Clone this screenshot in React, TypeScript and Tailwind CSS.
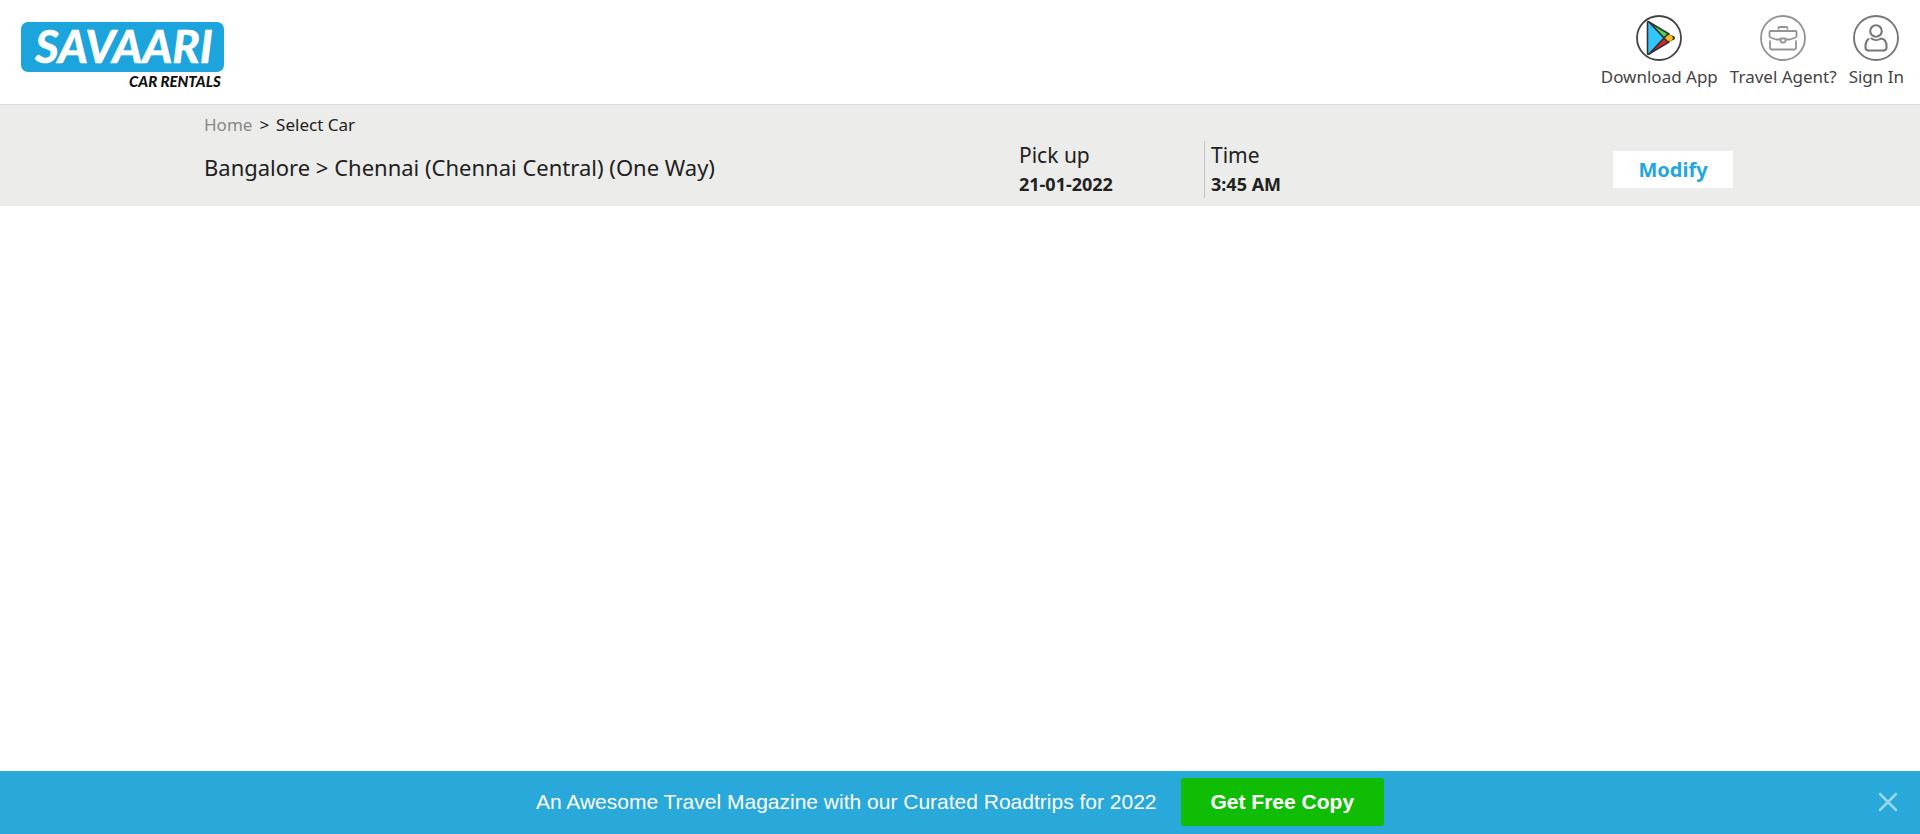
import type { ReactNode } from "react";

function Logo() {
  return (
    <a href="#" aria-label="Savaari Car Rentals" className="block">
      <svg width="208" height="88" viewBox="0 -14 208 88" fontFamily="Lato, sans-serif" fontStyle="italic">
        <rect x="1" y="2" width="203" height="50" rx="7" fill="#1ba5dc" />
        <text x="15" y="43" fontSize="46" fontWeight="700" fill="#fff" stroke="#fff" strokeWidth="0.7">SAVAARI</text>
        <text x="109" y="67" fontSize="15" fontWeight="900" fill="#111">CAR RENTALS</text>
      </svg>
    </a>
  );
}

function PlayIcon() {
  return (
    <svg width="46" height="46" viewBox="0 0 46 46" fill="none">
      <circle cx="23" cy="23" r="22" stroke="#444" strokeWidth="1.8" />
      <g stroke="#333" strokeWidth="1.6" strokeLinejoin="round">
        <path d="M13 7 L33 19 L28 23 Z" fill="#4bd94b" />
        <path d="M13 39 L33 27 L28 23 Z" fill="#e0262c" />
        <path d="M31.500 19.500 L37.500 22 Q39 23 37.500 24 L31.500 26.500 L28 23 Z" fill="#f7bd0b" />
        <path d="M11.500 8 Q11.500 6 13 7 L28 23 L13 39 Q11.500 40 11.500 38 Z" fill="#33c5ff" />
      </g>
      <circle cx="33.500" cy="23" r="3" fill="#f7bd0b" />
    </svg>
  );
}

function BriefcaseIcon() {
  return (
    <svg width="46" height="46" viewBox="0 0 46 46" fill="none" stroke="#939393" strokeWidth="1.8" strokeLinejoin="round">
      <circle cx="23" cy="23" r="22" />
      <path d="M18.500 14.500 V13 Q18.500 12 20 12 H26 Q27.500 12 27.500 13 V14.500" />
      <path d="M20.500 24.500 H16 L10.500 22.500 Q9.500 22 9.500 21 V17 Q9.500 16 10.500 16 H35.500 Q36.500 16 36.500 17 V21 Q36.500 22 35.500 22.500 L30 24.500 H25.500" />
      <path d="M10 25.500 V33 Q10 34.500 11.500 34.500 H34.500 Q36 34.500 36 33 V25.500" />
      <path d="M20.500 23.500 H25.500 V26 L24.500 27.500 H21.500 L20.500 26 Z" />
    </svg>
  );
}

function UserIcon() {
  return (
    <svg width="46" height="46" viewBox="0 0 46 46" fill="none" stroke="#777" strokeWidth="2.1" strokeLinecap="round">
      <circle cx="23" cy="23" r="22" strokeWidth="1.9" />
      <circle cx="23" cy="16" r="5.8" />
      <path d="M15.500 24 C13.500 25.500 12.500 28 12.500 31 V32.500 Q12.500 35.500 15.500 35.500 H30.500 Q33.500 35.500 33.500 32.500 V31 C33.500 27 32 24 28 23.500 C25 25.500 21 25.500 18.500 23.500" />
    </svg>
  );
}

function HeaderLink({ icon, label }: { icon: ReactNode; label: string }) {
  return (
    <a href="#" className="flex flex-col items-center gap-1 text-[17px] leading-6 whitespace-nowrap text-[#444]">
      {icon}
      {label}
    </a>
  );
}

export default function App() {
  return (
    <div className="flex min-h-screen flex-col bg-white font-['Noto_Sans',sans-serif] text-[#212121]">
      <header className="flex h-[105px] items-start justify-between border-b border-[#d8dadb] pr-4 pl-5">
        <div className="pt-[6px]">
          <Logo />
        </div>
        <nav className="flex gap-3 pt-[15px]">
          <HeaderLink icon={<PlayIcon />} label="Download App" />
          <HeaderLink icon={<BriefcaseIcon />} label="Travel Agent?" />
          <HeaderLink icon={<UserIcon />} label="Sign In" />
        </nav>
      </header>

      <section className="flex bg-[#ececea] pr-[187px] pb-2 pl-[204px]">
        <div className="flex-1 pt-2">
          <nav aria-label="Breadcrumb" className="flex gap-[7px] text-[17px] leading-6">
            <a href="#" className="text-[#888]">Home</a>
            <span>&gt;</span>
            <span>Select Car</span>
          </nav>
          <h1 className="pt-3.5 text-[22px] leading-8">Bangalore &gt; Chennai (Chennai Central) (One Way)</h1>
        </div>
        <dl className="flex pt-9">
          <div className="w-[185px]">
            <dt className="text-[21px] leading-7">Pick up</dt>
            <dd className="pt-px text-lg leading-7 font-bold">21-01-2022</dd>
          </div>
          <div className="w-[409px] border-l border-[#c4c4c4] pl-[6px]">
            <dt className="text-[21px] leading-7">Time</dt>
            <dd className="pt-px text-lg leading-7 font-bold">3:45 AM</dd>
          </div>
        </dl>
        <div className="pt-[46px]">
          <button type="button" className="h-[37px] w-[120px] bg-white text-xl font-bold text-[#22a6dc]">
            Modify
          </button>
        </div>
      </section>

      <main className="flex-1" />

      <aside className="flex h-[63px] items-center bg-[#29a8da] px-5 pb-px font-['Liberation_Sans',Arial,sans-serif] text-white">
        <div className="flex flex-1 items-center justify-center gap-6 pl-[22px]">
          <p className="text-[21px]">An Awesome Travel Magazine with our Curated Roadtrips for 2022</p>
          <button type="button" className="h-12 rounded-[3px] bg-[#0fbd05] px-[30px] text-[21px] font-bold">
            Get Free Copy
          </button>
        </div>
        <button type="button" aria-label="Close">
          <svg width="22" height="22" viewBox="0 0 22 22" stroke="#9ad8ef" strokeWidth="2.5" strokeLinecap="round">
            <path d="M2 3 L18 19 M18 3 L2 19" />
          </svg>
        </button>
      </aside>
    </div>
  );
}
